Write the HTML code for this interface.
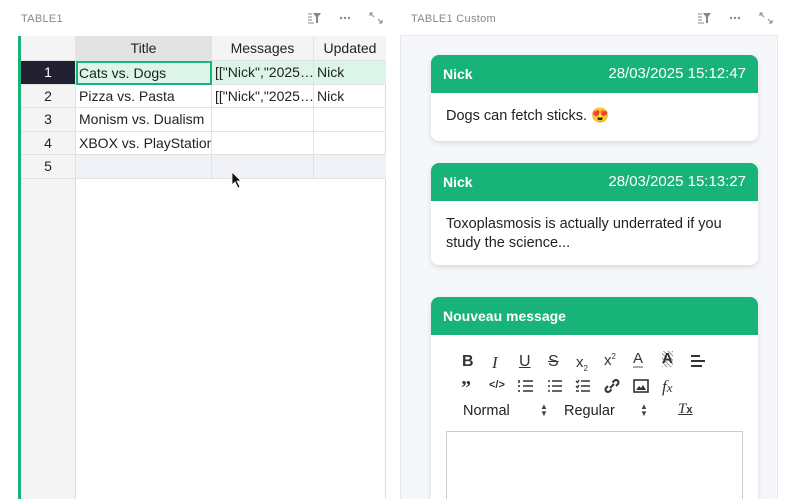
<!DOCTYPE html>
<html style="width:800px;height:499px;overflow:hidden"><head><meta charset="utf-8"><style>
*{box-sizing:border-box;margin:0;padding:0}
body{width:800px;height:499px;overflow:hidden;background:#fff;font-family:"Liberation Sans",sans-serif;position:relative;color:#222}
.a{position:absolute}
.lbl{font-size:11px;color:#888;letter-spacing:.3px}
.cell{position:absolute;font-size:14px;padding-left:3px;line-height:23px;white-space:nowrap;overflow:hidden;border-right:1px solid #e2e2e2;border-bottom:1px solid #e2e2e2}
.num{text-align:center;padding:0;background:#f4f4f4}
.card{position:absolute;left:431px;width:327px;background:#fff;border-radius:8px;box-shadow:0 2px 6px rgba(0,0,0,.12);overflow:hidden}
.hd{background:#17b378;color:#fff;font-weight:bold;font-size:14px;height:38px;line-height:38px;padding:0 12px;display:flex;justify-content:space-between}
.hd span+span{font-weight:normal;font-size:15px}
.bd{padding:14px 15px;font-size:14.5px;line-height:19px}
.tb{position:absolute;font-size:15px;color:#333;font-weight:bold}
</style></head><body>
<div class="a lbl" style="left:21px;top:13px">TABLE1</div>
<div class="a lbl" style="left:411px;top:13px">TABLE1 Custom</div>
<svg class="a" style="left:306px;top:11px" width="80" height="14" viewBox="0 0 80 14">
<g fill="#888" stroke="#888">
<path d="M2 3h4M2 6h4M2 9h4M2 12h6" stroke-width="1" fill="none"/><path d="M7 2h8l-3 4v6h-2V6z" stroke="none"/>
<circle cx="35" cy="7" r="1.2" stroke="none"/><circle cx="39" cy="7" r="1.2" stroke="none"/><circle cx="43" cy="7" r="1.2" stroke="none"/>
<path d="M64 2l4 4M64 2h3M64 2v3M76 12l-4-4M76 12h-3M76 12v-3" fill="none" stroke-width="1"/>
</g></svg>
<svg class="a" style="left:696px;top:11px" width="80" height="14" viewBox="0 0 80 14">
<g fill="#888" stroke="#888">
<path d="M2 3h4M2 6h4M2 9h4M2 12h6" stroke-width="1" fill="none"/><path d="M7 2h8l-3 4v6h-2V6z" stroke="none"/>
<circle cx="35" cy="7" r="1.2" stroke="none"/><circle cx="39" cy="7" r="1.2" stroke="none"/><circle cx="43" cy="7" r="1.2" stroke="none"/>
<path d="M64 2l4 4M64 2h3M64 2v3M76 12l-4-4M76 12h-3M76 12v-3" fill="none" stroke-width="1"/>
</g></svg>

<div class="a" style="left:18px;top:36px;width:3px;height:463px;background:#17b378"></div>
<div class="a" style="left:21px;top:36px;width:365px;height:463px;border-right:1px solid #ddd;border-top:1px solid #e2e2e2"></div>
<div class="a" style="left:21px;top:36px;width:55px;height:463px;background:#f4f4f4;border-right:1px solid #ddd"></div>
<div class="cell num" style="left:21px;top:36px;width:55px;height:25px;background:#f4f4f4"></div>
<div class="cell" style="left:76px;top:36px;width:136px;height:25px;text-align:center;background:#e3e3e3;padding:0;line-height:25px">Title</div>
<div class="cell" style="left:212px;top:36px;width:102px;height:25px;text-align:center;background:#f4f4f4;padding:0;line-height:25px">Messages</div>
<div class="cell" style="left:314px;top:36px;width:72px;height:25px;text-align:center;background:#f4f4f4;padding:0;line-height:25px;border-right:none">Updated</div>

<div class="cell num" style="left:21px;top:61px;width:55px;height:24px;background:#212133;color:#fff">1</div>
<div class="cell" style="left:76px;top:61px;width:136px;height:24px;background:#dcf5e8;border:2px solid #17b378;line-height:20px;padding-left:1px">Cats vs. Dogs</div>
<div class="cell" style="left:212px;top:61px;width:102px;height:24px;background:#dcf5e8">[["Nick","2025…</div>
<div class="cell" style="left:314px;top:61px;width:72px;height:24px;background:#dcf5e8;border-right:none">Nick</div>

<div class="cell num" style="left:21px;top:85px;width:55px;height:23px">2</div>
<div class="cell" style="left:76px;top:85px;width:136px;height:23px">Pizza vs. Pasta</div>
<div class="cell" style="left:212px;top:85px;width:102px;height:23px">[["Nick","2025…</div>
<div class="cell" style="left:314px;top:85px;width:72px;height:23px;border-right:none">Nick</div>

<div class="cell num" style="left:21px;top:108px;width:55px;height:24px">3</div>
<div class="cell" style="left:76px;top:108px;width:136px;height:24px">Monism vs. Dualism</div>
<div class="cell" style="left:212px;top:108px;width:102px;height:24px"></div>
<div class="cell" style="left:314px;top:108px;width:72px;height:24px;border-right:none"></div>

<div class="cell num" style="left:21px;top:132px;width:55px;height:23px">4</div>
<div class="cell" style="left:76px;top:132px;width:136px;height:23px">XBOX vs. PlayStation</div>
<div class="cell" style="left:212px;top:132px;width:102px;height:23px"></div>
<div class="cell" style="left:314px;top:132px;width:72px;height:23px;border-right:none"></div>

<div class="cell num" style="left:21px;top:155px;width:55px;height:24px">5</div>
<div class="cell" style="left:76px;top:155px;width:136px;height:24px;background:#f1f1f8"></div>
<div class="cell" style="left:212px;top:155px;width:102px;height:24px;background:#f1f1f8"></div>
<div class="cell" style="left:314px;top:155px;width:72px;height:24px;background:#f1f1f8;border-right:none"></div>
<svg class="a" style="left:231px;top:171px" width="12" height="18"><path d="M1 1v13l3-3 3 6 2-1-3-6h4z" fill="#111" stroke="#fff" stroke-width=".8"/></svg>

<div class="a" style="left:400px;top:35px;width:378px;height:464px;background:#f5f7fa;border:1px solid #e6e8ec;border-bottom:none"></div>

<div class="card" style="top:55px;height:86px">
<div class="hd"><span>Nick</span><span>28/03/2025 15:12:47</span></div>
<div class="bd">Dogs can fetch sticks. 😍</div></div>

<div class="card" style="top:163px;height:102px">
<div class="hd"><span>Nick</span><span>28/03/2025 15:13:27</span></div>
<div class="bd">Toxoplasmosis is actually underrated if you study the science...</div></div>

<div class="card" style="top:297px;height:202px;border-radius:8px 8px 0 0">
<div class="hd"><span>Nouveau message</span></div></div>

<div class="tb" style="left:462px;top:353px;font-size:16px">B</div>
<div class="tb" style="left:492px;top:353px;font-family:'Liberation Serif';font-style:italic;font-weight:normal;font-size:17px">I</div>
<div class="tb" style="left:519px;top:353px;text-decoration:underline;font-weight:normal;font-size:16px">U</div>
<div class="tb" style="left:548px;top:353px;text-decoration:line-through;font-weight:normal;font-size:16px">S</div>
<div class="tb" style="left:576px;top:354px;font-weight:normal">x<sub style="font-size:8px">2</sub></div>
<div class="tb" style="left:604px;top:352px;font-weight:normal">x<sup style="font-size:8px">2</sup></div>
<div class="tb" style="left:633px;top:351px;font-weight:normal;border-bottom:2px solid #aaa;line-height:15px">A</div>
<div class="tb" style="left:662px;top:351px;background:repeating-linear-gradient(45deg,#999 0 1px,#fff 1px 3px);line-height:16px">A</div>
<svg class="a" style="left:690px;top:354px" width="16" height="14"><path d="M1 2h9M1 7h14M1 12h11" stroke="#333" stroke-width="2"/></svg>
<div class="tb" style="left:461px;top:378px;font-family:'Liberation Serif';font-size:20px;line-height:20px">”</div>
<div class="tb" style="left:489px;top:379px;font-size:11px">&lt;/&gt;</div>
<svg class="a" style="left:518px;top:379px" width="16" height="14"><path d="M5 2h10M5 7h10M5 12h10M1 1v3M1 6v2M1 11v2" stroke="#333" stroke-width="1.6"/></svg>
<svg class="a" style="left:547px;top:379px" width="16" height="14"><path d="M5 2h10M5 7h10M5 12h10M1 2h2M1 7h2M1 12h2" stroke="#333" stroke-width="1.6"/></svg>
<svg class="a" style="left:575px;top:379px" width="16" height="14"><path d="M6 2h9M6 7h9M6 12h9M1 2l1.5 1.5L4 1M1 7l1.5 1.5L4 6M1 12h3" stroke="#333" stroke-width="1.4" fill="none"/></svg>
<svg class="a" style="left:604px;top:378px" width="16" height="16"><path d="M6 10l4-4M4 8l-2 2a2.5 2.5 0 003.5 3.5l2-2M12 8l2-2a2.5 2.5 0 00-3.5-3.5l-2 2" stroke="#333" stroke-width="2" fill="none"/></svg>
<svg class="a" style="left:633px;top:379px" width="16" height="14"><rect x="1" y="1" width="14" height="12" stroke="#333" stroke-width="1.6" fill="none"/><path d="M3 11l3-4 2 2 2-3 3 5z" fill="#333"/></svg>
<div class="tb" style="left:662px;top:377px;font-family:'Liberation Serif';font-style:italic;font-weight:normal;font-size:17px">f<span style="font-size:13px">x</span></div>

<div class="a" style="left:463px;top:403px;font-size:14.5px">Normal</div>
<div class="a" style="left:540px;top:403px;font-size:8px;line-height:7px;color:#444">▲<br>▼</div>
<div class="a" style="left:564px;top:403px;font-size:14.5px">Regular</div>
<div class="a" style="left:640px;top:403px;font-size:8px;line-height:7px;color:#444">▲<br>▼</div>
<div class="a" style="left:678px;top:401px;font-size:15px;font-family:'Liberation Serif';font-style:italic;text-decoration:underline;color:#333">T<span style="font-size:11px;font-weight:bold;font-style:normal;font-family:'Liberation Sans'">x</span></div>

<div class="a" style="left:446px;top:431px;width:297px;height:80px;border:1px solid #ccc;background:#fff"></div>
</body></html>
